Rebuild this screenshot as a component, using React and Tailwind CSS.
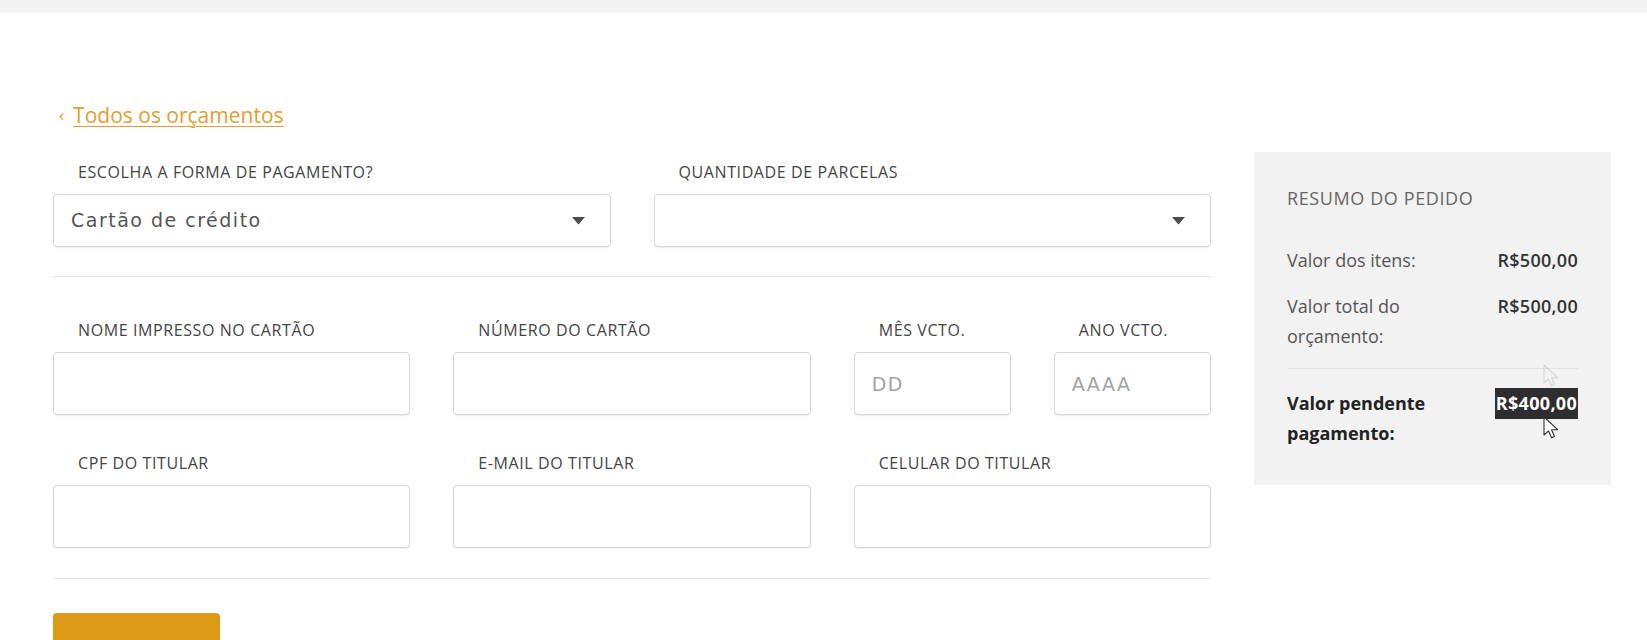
import React from 'react';

const labelCls = "block pl-[25px] mb-[12px] text-[16px] leading-[20px] text-[#444] uppercase font-['Open_Sans',sans-serif] tracking-[0.6px]";
const inputCls = "block w-full h-[63px] rounded-[4px] border border-[#d6d6d6] bg-white shadow-[0_1px_2px_rgba(0,0,0,0.08)] px-[17px] text-[19px] tracking-[1.5px] text-[#555] font-['DejaVu_Sans',sans-serif] placeholder:text-[#a3a3a3] outline-none";

const Field = ({ label, placeholder }) => (
  <div>
    <label className={labelCls}>{label}</label>
    <input className={inputCls} placeholder={placeholder} />
  </div>
);

const Select = ({ label, value }) => (
  <div>
    <label className={labelCls}>{label}</label>
    <div className="flex items-center justify-between h-[53px] rounded-[4px] border border-[#d6d6d6] bg-white shadow-[0_1px_2px_rgba(0,0,0,0.08)] pl-[17px] pr-[25px]">
      <span className="text-[19px] tracking-[1.5px] text-[#555] font-['DejaVu_Sans',sans-serif]">{value}</span>
      <svg width="13" height="8" viewBox="0 0 13 8"><path d="M0 0h13L6.5 7.5z" fill="#4d4d4d" /></svg>
    </div>
  </div>
);

const Pointer = ({ className }) => (
  <svg className={className} width="17" height="24" viewBox="0 0 17 24">
    <path d="M1 1v18l4.5-4.2 3 7 3-1.3-3-6.8h6.2z" fill="#fff" stroke="#333" strokeWidth="1.1" strokeLinejoin="round" />
  </svg>
);

const SummaryRow = ({ label, value, bold }) => (
  <div className={`flex justify-between gap-4 text-[18px] leading-[30px] ${bold ? 'font-bold text-[#222]' : 'text-[#555]'}`}>
    <span className="w-[160px]">{label}</span>
    {bold ? (
      <span className="relative self-start">
        <span className="bg-[#2e2e2e] text-white px-[1px] leading-[31px] inline-block tracking-[0.3px]">{value}</span>
        {/* mouse pointer and its faint trail */}
        <Pointer className="absolute left-[48px] top-[-24px] opacity-15" />
        <Pointer className="absolute left-[48px] top-[28px]" />
      </span>
    ) : (
      <span className="font-semibold text-[#333] tracking-[0.3px]">{value}</span>
    )}
  </div>
);

export default function App() {
  return (
    <div className="min-h-screen bg-white font-['Open_Sans',sans-serif] overflow-hidden">
      <div className="h-[13px] bg-[#f3f3f3]" />

      <div className="flex gap-[43px] pl-[53px] pt-[89px]">
        {/* Form column */}
        <div className="w-[1158px]">
          <a href="#" className="flex items-center gap-[9px] ml-[6px] text-[21px] leading-[26px] text-[#e0a030]">
            <span className="text-[17px]">‹</span>
            <span className="underline underline-offset-[3px] decoration-1">Todos os orçamentos</span>
          </a>

          <div className="grid grid-cols-2 gap-x-[43px] mt-[34px]">
            <Select label="Escolha a forma de pagamento?" value="Cartão de crédito" />
            <Select label="Quantidade de parcelas" value="" />
          </div>

          <hr className="mt-[29px] border-0 border-t border-[#e8e8e8]" />

          <div className="grid grid-cols-3 gap-x-[43px] gap-y-[38px] mt-[43px]">
            <Field label="Nome impresso no cartão" />
            <Field label="Número do cartão" />
            <div className="grid grid-cols-2 gap-x-[43px]">
              <Field label="Mês vcto." placeholder="DD" />
              <Field label="Ano vcto." placeholder="AAAA" />
            </div>
            <Field label="CPF do titular" />
            <Field label="E-mail do titular" />
            <Field label="Celular do titular" />
          </div>

          <hr className="mt-[30px] border-0 border-t border-[#e8e8e8]" />

          <button className="mt-[34px] w-[167px] h-[50px] rounded-[4px] bg-[#dd9a17] text-white text-[16px] font-semibold uppercase pt-[18px]">
            Finalizar
          </button>
        </div>

        {/* Order summary */}
        <aside className="w-[357px] h-[333px] mt-[50px] bg-[#f2f2f2] px-[33px] pt-[34px]">
          <h2 className="text-[18px] leading-[24px] tracking-[0.6px] text-[#666] uppercase">Resumo do pedido</h2>
          <div className="mt-[35px] flex flex-col gap-[16px]">
            <SummaryRow label="Valor dos itens:" value="R$500,00" />
            <SummaryRow label="Valor total do orçamento:" value="R$500,00" />
          </div>
          <hr className="mt-[17px] border-0 border-t border-[#e2e2e2]" />
          <div className="mt-[19px]">
            <SummaryRow label="Valor pendente pagamento:" value="R$400,00" bold />
          </div>
        </aside>
      </div>
    </div>
  );
}
